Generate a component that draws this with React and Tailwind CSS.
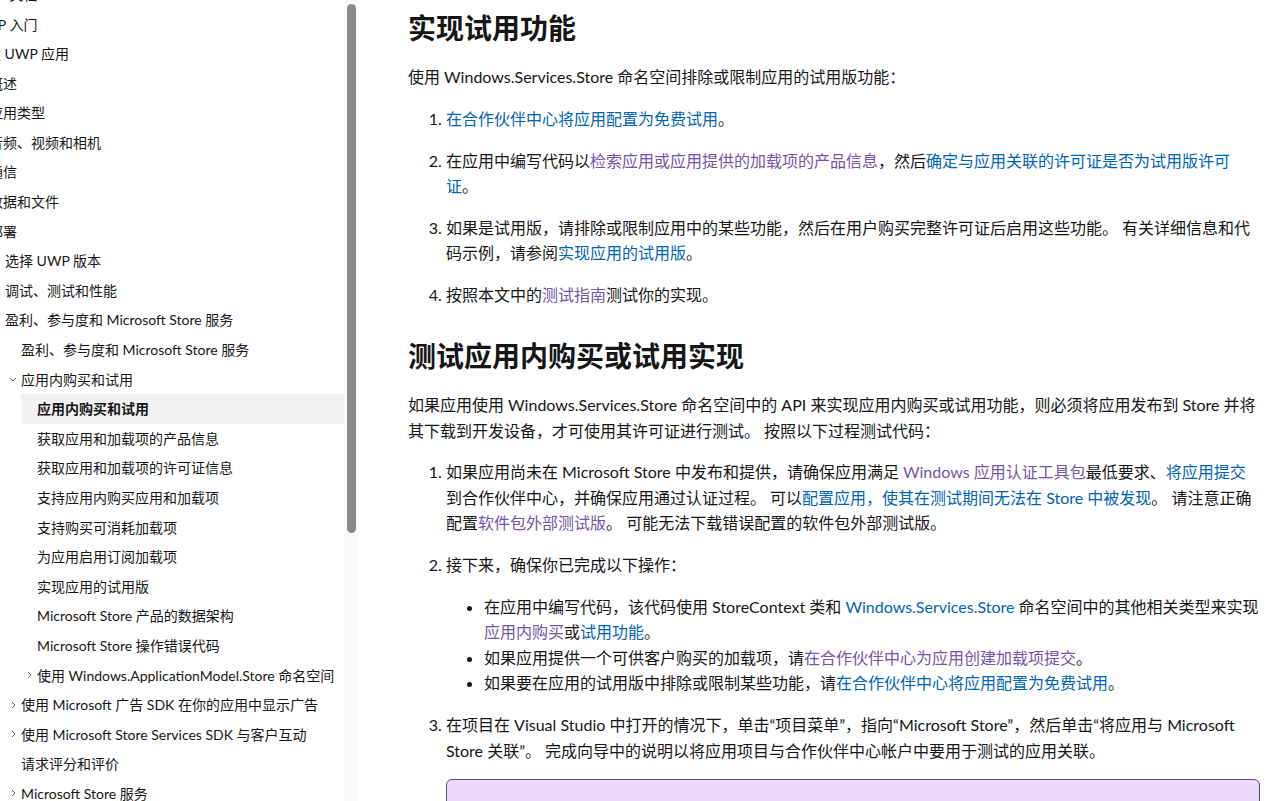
import React from "react";

const NAV = [
    { t: "UWP 文档", l: 0 },
    { t: "UWP 入门", l: 0, c: "r" },
    { t: "开发 UWP 应用", l: 0, c: "d" },
    { t: "概述", l: 1 },
    { t: "应用类型", l: 1, c: "r" },
    { t: "音频、视频和相机", l: 1, c: "r" },
    { t: "通信", l: 1, c: "r" },
    { t: "数据和文件", l: 1, c: "r" },
    { t: "部署", l: 1, c: "d" },
    { t: "选择 UWP 版本", l: 2 },
    { t: "调试、测试和性能", l: 2, c: "r" },
    { t: "盈利、参与度和 Microsoft Store 服务", l: 2, c: "d" },
    { t: "盈利、参与度和 Microsoft Store 服务", l: 3 },
    { t: "应用内购买和试用", l: 3, c: "d" },
    { t: "应用内购买和试用", l: 4, sel: true },
    { t: "获取应用和加载项的产品信息", l: 4 },
    { t: "获取应用和加载项的许可证信息", l: 4 },
    { t: "支持应用内购买应用和加载项", l: 4 },
    { t: "支持购买可消耗加载项", l: 4 },
    { t: "为应用启用订阅加载项", l: 4 },
    { t: "实现应用的试用版", l: 4 },
    { t: "Microsoft Store 产品的数据架构", l: 4 },
    { t: "Microsoft Store 操作错误代码", l: 4 },
    { t: "使用 Windows.ApplicationModel.Store 命名空间", l: 4, c: "r" },
    { t: "使用 Microsoft 广告 SDK 在你的应用中显示广告", l: 3, c: "r" },
    { t: "使用 Microsoft Store Services SDK 与客户互动", l: 3, c: "r" },
    { t: "请求评分和评价", l: 3 },
    { t: "Microsoft Store 服务", l: 3, c: "r" },
];

const indent = ["ml-0", "ml-4", "ml-8", "ml-12", "ml-16"];

function Chevron({ dir }) {
    if (dir === "d") {
        return (
            <span className="-ml-[12px] mr-[4px] flex w-[8px] justify-center text-[#5c5c5c]">
                <svg width="8" height="5" viewBox="0 0 8 5" fill="none">
                    <path d="M1 1 L4 4 L7 1" stroke="currentColor" strokeWidth="1" />
                </svg>
            </span>
        );
    }
    return (
        <span className="-ml-[11px] mr-[5px] flex w-[6px] justify-center text-[#5c5c5c]">
            <svg width="5" height="8" viewBox="0 0 5 8" fill="none">
                <path d="M1 1 L4 4 L1 7" stroke="currentColor" strokeWidth="1" />
            </svg>
        </span>
    );
}

const A = ({ children }) => <a className="text-[#0065b3]">{children}</a>;
const V = ({ children }) => <a className="text-[#7356a5]">{children}</a>;

export default function App() {
    return (
        <div className="flex h-[801px] w-[1278px] overflow-hidden bg-white text-[#161616] font-['Lato','Noto_Sans_CJK_SC',sans-serif]">
            {/* left toc */}
            <div className="flex w-[359px] flex-none">
                <nav className="w-[344px] overflow-hidden text-[14px] whitespace-nowrap">
                    <div className="-ml-[43px] -mt-[20.4px]">
                        {NAV.map((n, i) => (
                            <div
                                key={i}
                                className={`flex h-[29.6px] items-center pl-4 ${indent[n.l]} ${n.sel ? "bg-[#f2f2f2] font-bold" : ""}`}
                            >
                                {n.c && <Chevron dir={n.c} />}
                                <span>{n.t}</span>
                            </div>
                        ))}
                    </div>
                </nav>
                <div className="w-[15px] bg-[#fafafa]">
                    <div className="ml-[3px] mt-[4px] h-[529px] w-[9px] rounded-full bg-[#8a8a8a]" />
                </div>
            </div>

            {/* article */}
            <main className="ml-[49px] w-[852px] flex-none pt-[10px] text-[16px] leading-[25.6px] whitespace-nowrap">
                <h2 className="mb-[18px] text-[28px] leading-[36.4px] font-bold">实现试用功能</h2>
                <p className="mb-4">使用 Windows.Services.Store 命名空间排除或限制应用的试用版功能：</p>
                <ol className="list-decimal space-y-4 pl-[38px]">
                    <li>
                        <A>在合作伙伴中心将应用配置为免费试用</A>。
                    </li>
                    <li>
                        在应用中编写代码以<V>检索应用或应用提供的加载项的产品信息</V>，然后<A>确定与应用关联的许可证是否为试用版许可<br />证</A>。
                    </li>
                    <li>
                        如果是试用版，请排除或限制应用中的某些功能，然后在用户购买完整许可证后启用这些功能。 有关详细信息和代<br />码示例，请参阅<A>实现应用的试用版</A>。
                    </li>
                    <li>
                        按照本文中的<V>测试指南</V>测试你的实现。
                    </li>
                </ol>

                <h2 className="mt-[30px] mb-[18px] text-[28px] leading-[36.4px] font-bold">测试应用内购买或试用实现</h2>
                <p className="mb-4">
                    如果应用使用 Windows.Services.Store 命名空间中的 API 来实现应用内购买或试用功能，则必须将应用发布到 Store 并将<br />
                    其下载到开发设备，才可使用其许可证进行测试。 按照以下过程测试代码：
                </p>
                <ol className="list-decimal space-y-4 pl-[38px]">
                    <li>
                        如果应用尚未在 Microsoft Store 中发布和提供，请确保应用满足 <V>Windows 应用认证工具包</V>最低要求、<A>将应用提交</A><br />到合作伙伴中心，并确保应用通过认证过程。 可以<A>配置应用，使其在测试期间无法在 Store 中被发现</A>。 请注意正确<br />
                        配置<V>软件包外部测试版</V>。 可能无法下载错误配置的软件包外部测试版。
                    </li>
                    <li>
                        接下来，确保你已完成以下操作：
                        <ul className="mt-4 list-disc pl-[38px]">
                            <li>
                                在应用中编写代码，该代码使用 StoreContext 类和 <A>Windows.Services.Store</A> 命名空间中的其他相关类型来实现<br />
                                <V>应用内购买</V>或<A>试用功能</A>。
                            </li>
                            <li>
                                如果应用提供一个可供客户购买的加载项，请<V>在合作伙伴中心为应用创建加载项提交</V>。
                            </li>
                            <li>
                                如果要在应用的试用版中排除或限制某些功能，请<A>在合作伙伴中心将应用配置为免费试用</A>。
                            </li>
                        </ul>
                    </li>
                    <li>
                        在项目在 Visual Studio 中打开的情况下，单击“项目菜单”，指向“Microsoft Store”，然后单击“将应用与 Microsoft<br />
                        Store 关联”。 完成向导中的说明以将应用项目与合作伙伴中心帐户中要用于测试的应用关联。
                        <div className="mt-4 h-[80px] rounded-[6px] border border-[#5e4a8a] bg-[#ecd8f9]" />
                    </li>
                </ol>
            </main>
        </div>
    );
}
